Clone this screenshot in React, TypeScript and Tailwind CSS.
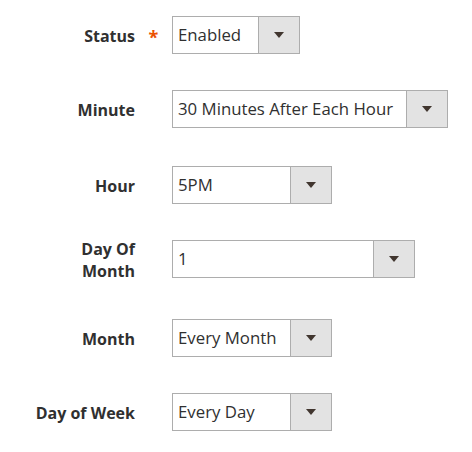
import React from 'react';

interface Field {
  label: string;
  value: string;
  width: string;
  required?: boolean;
  spacing: string;
}

const fields: Field[] = [
  { label: 'Status', value: 'Enabled', width: 'w-[128px]', required: true, spacing: 'mt-[16px]' },
  { label: 'Minute', value: '30 Minutes After Each Hour', width: 'w-[276px]', spacing: 'mt-[36px]' },
  { label: 'Hour', value: '5PM', width: 'w-[160px]', spacing: 'mt-[38px]' },
  { label: 'Day Of Month', value: '1', width: 'w-[243px]', spacing: 'mt-[32px]' },
  { label: 'Month', value: 'Every Month', width: 'w-[160px]', spacing: 'mt-[37px]' },
  { label: 'Day of Week', value: 'Every Day', width: 'w-[160px]', spacing: 'mt-[36px]' },
];

const Select: React.FC<{ value: string; width: string }> = ({ value, width }) => (
  <div className={`${width} h-[38px] flex border border-[#adadad] bg-white`}>
    <div className="flex-1 flex items-center pl-[5px] text-[16.8px] text-[#303030] whitespace-nowrap overflow-hidden">
      {value}
    </div>
    <div className="w-[41px] flex items-center justify-center bg-[#e3e3e3] border-l border-[#adadad]">
      <svg width="10" height="6" viewBox="0 0 10 6">
        <polygon points="0,0 10,0 5,6" fill="#41362f" />
      </svg>
    </div>
  </div>
);

const App: React.FC = () => {
  return (
    <div
      className="w-[472px] h-[452px] bg-white flex flex-col"
      style={{ fontFamily: '"Open Sans", "Liberation Sans", sans-serif' }}
    >
      {fields.map(field => (
        <div key={field.label} className={`${field.spacing} flex items-center`}>
          <div className="w-[104px] ml-[31px] text-right text-[16px] leading-[22px] font-bold text-[#303030] pt-[2px]">
            {field.label}
          </div>
          <div className="w-[37px] flex justify-center">
            {field.required && (
              <span className="text-[#eb5202] text-[18px] font-bold leading-none mt-[4px]">*</span>
            )}
          </div>
          <Select value={field.value} width={field.width} />
        </div>
      ))}
    </div>
  );
};

export default App;
